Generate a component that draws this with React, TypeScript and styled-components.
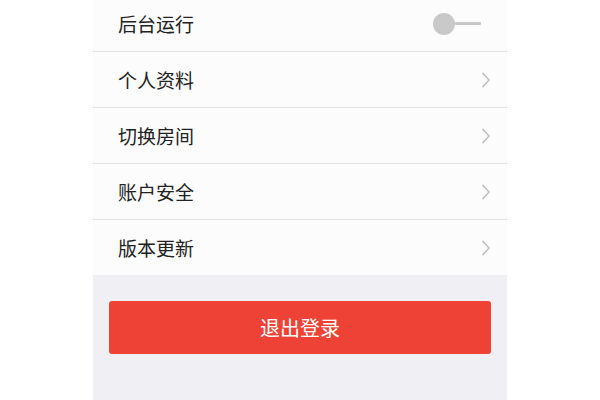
import React from "react";
import styled, { createGlobalStyle } from "styled-components";

const Global = createGlobalStyle`
  html, body { margin: 0; padding: 0; background: #ffffff; }
  body { font-family: "Noto Sans CJK SC", "Noto Sans", sans-serif; overflow: hidden; }
`;

const Page = styled.div`
  width: 600px;
  height: 400px;
  display: flex;
  justify-content: center;
  overflow: hidden;
`;

const Phone = styled.div`
  width: 414px;
  display: flex;
  flex-direction: column;
  background: #efeff4;
`;

const List = styled.div`
  margin-top: -4px;
  background: #fcfcfc;
  display: flex;
  flex-direction: column;
`;

const Row = styled.div<{ $last?: boolean }>`
  height: ${(p) => (p.$last ? 55 : 56)}px;
  box-sizing: border-box;
  display: flex;
  align-items: center;
  justify-content: space-between;
  padding: 0 16px 0 25px;
  border-bottom: ${(p) => (p.$last ? "none" : "1px solid #e2e2e4")};
`;

const Label = styled.span`
  font-size: 19px;
  color: #222222;
  line-height: 1;
`;

const Toggle = styled.div`
  width: 48px;
  height: 22px;
  display: flex;
  align-items: center;
  margin-right: 10px;
`;

const Knob = styled.div`
  width: 22px;
  height: 22px;
  border-radius: 50%;
  background: #c9c9c9;
  flex: none;
`;

const Track = styled.div`
  flex: 1;
  height: 3px;
  background: #c8c8c8;
  border-radius: 1px;
`;

const Chevron = () => (
  <svg width="10" height="16" viewBox="0 0 10 16">
    <path d="M2 1.5 L8 8 L2 14.5" fill="none" stroke="#c4c4c8" strokeWidth="1.8" strokeLinecap="round" strokeLinejoin="round" />
  </svg>
);

const Footer = styled.div`
  flex: 1;
  padding: 26px 16px 0;
`;

const LogoutButton = styled.button`
  width: 100%;
  height: 53px;
  border: none;
  border-radius: 3px;
  background: #ef4236;
  color: #ffffff;
  font-family: "Noto Sans CJK SC", "Noto Sans", sans-serif;
  font-size: 20px;
  display: flex;
  align-items: center;
  justify-content: center;
  padding: 0;
`;

const items = ["个人资料", "切换房间", "账户安全", "版本更新"];

export default function App() {
  return (
    <>
      <Global />
      <Page>
        <Phone>
          <List>
            <Row>
              <Label>后台运行</Label>
              <Toggle>
                <Knob />
                <Track />
              </Toggle>
            </Row>
            {items.map((t, i) => (
              <Row key={t} $last={i === items.length - 1}>
                <Label>{t}</Label>
                <Chevron />
              </Row>
            ))}
          </List>
          <Footer>
            <LogoutButton>退出登录</LogoutButton>
          </Footer>
        </Phone>
      </Page>
    </>
  );
}
